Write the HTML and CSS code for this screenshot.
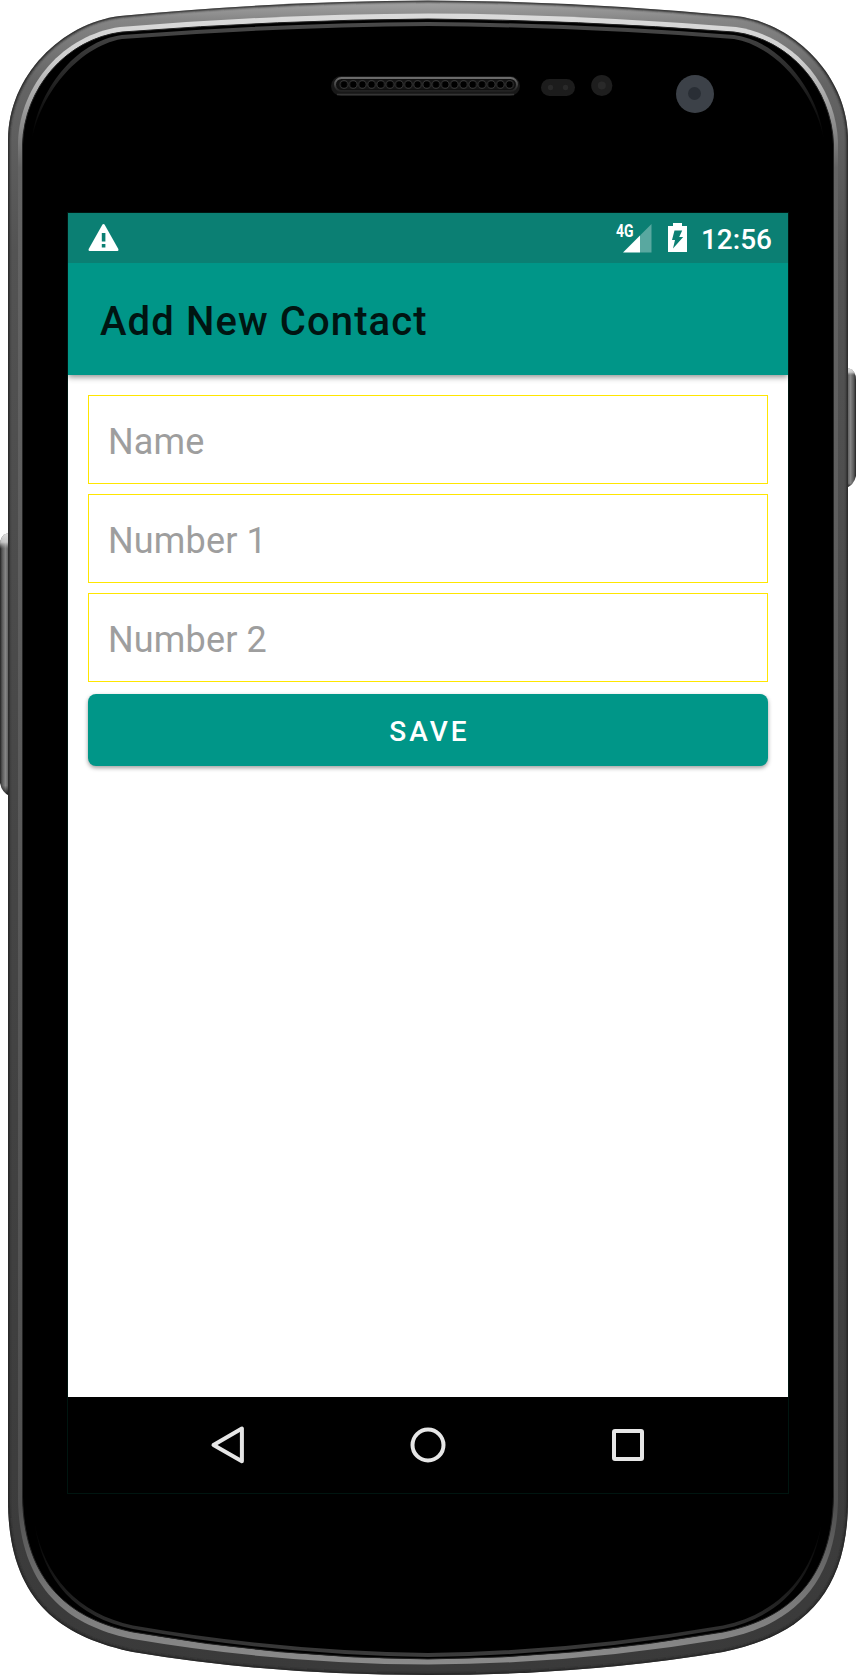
FILE: index.html
```html
<!DOCTYPE html>
<html lang="en">
<head>
<meta charset="utf-8">
<title>Add New Contact</title>
<link rel="stylesheet" href="styles.css">
</head>
<body>
<div class="phone">
  <svg class="shell" viewBox="0 0 856 1676" aria-hidden="true">
    <defs>
      <linearGradient id="rim" x1="0" y1="0" x2="0" y2="1676" gradientUnits="userSpaceOnUse">
        <stop offset="0" stop-color="#a6a6a6"/><stop offset=".012" stop-color="#858585"/><stop offset=".05" stop-color="#646464"/><stop offset=".15" stop-color="#535353"/><stop offset=".5" stop-color="#464646"/><stop offset="1" stop-color="#3a3a3a"/>
      </linearGradient>
      <linearGradient id="bevel" x1="0" y1="0" x2="0" y2="1676" gradientUnits="userSpaceOnUse">
        <stop offset="0" stop-color="#dedede"/><stop offset=".035" stop-color="#cfcfcf"/><stop offset=".06" stop-color="#a4a4a4"/><stop offset=".1" stop-color="#646464"/><stop offset=".9" stop-color="#505050"/><stop offset=".96" stop-color="#7c7c7c"/><stop offset="1" stop-color="#8e8e8e"/>
      </linearGradient>
      <linearGradient id="keyL"><stop offset="0" stop-color="#222"/><stop offset=".2" stop-color="#555"/><stop offset=".55" stop-color="#858585"/><stop offset="1" stop-color="#484848"/></linearGradient>
      <linearGradient id="keyR"><stop offset="0" stop-color="#484848"/><stop offset=".45" stop-color="#858585"/><stop offset=".8" stop-color="#555"/><stop offset="1" stop-color="#222"/></linearGradient>
      <linearGradient id="keyEnds" x1="0" y1="0" x2="0" y2="1"><stop offset="0" stop-color="#ddd"/><stop offset=".035" stop-color="#ddd" stop-opacity=".8"/><stop offset=".06" stop-color="#aaa" stop-opacity="0"/><stop offset=".96" stop-color="#000" stop-opacity="0"/><stop offset="1" stop-color="#000" stop-opacity=".85"/></linearGradient>
      <linearGradient id="shineT" x1="0" y1="20" x2="0" y2="140" gradientUnits="userSpaceOnUse"><stop offset="0" stop-color="#4c4c4c"/><stop offset=".3" stop-color="#343434"/><stop offset=".7" stop-color="#161616"/><stop offset="1" stop-color="#000"/></linearGradient>
      <linearGradient id="shineB" x1="0" y1="1520" x2="0" y2="1655" gradientUnits="userSpaceOnUse"><stop offset="0" stop-color="#000"/><stop offset=".6" stop-color="#222"/><stop offset="1" stop-color="#3c3c3c"/></linearGradient>
      <linearGradient id="spk" x1="0" y1="0" x2="0" y2="1"><stop offset="0" stop-color="#6b6b6b"/><stop offset="1" stop-color="#202020"/></linearGradient>
      <pattern id="mesh" x="339.4" y="80" width="9.2" height="9" patternUnits="userSpaceOnUse">
        <rect width="9.2" height="9" fill="#151515"/><circle cx="4.6" cy="4.5" r="3.8" fill="#000" stroke="#444" stroke-width=".8"/>
      </pattern>
      <filter id="soft" x="-5%" y="-5%" width="110%" height="110%"><feGaussianBlur stdDeviation=".9"/></filter>
      <clipPath id="outline"><path d="M8 140C8 76 62 23 120 16Q280 1 428 .5Q576 1 736 16C794 23 848 76 848 140V1500C848 1600 796 1637 723 1652Q586 1675 428 1675Q270 1675 133 1652C60 1637 8 1600 8 1500Z"/></clipPath>
    </defs>
    <path fill="url(#keyL)" d="M10 533H8Q0 535 0 545V783Q2 793 10 796Z"/>
    <path fill="url(#keyEnds)" d="M10 533H8Q0 535 0 545V783Q2 793 10 796Z"/>
    <path fill="url(#keyR)" d="M846 368H848Q856 370 856 380V476Q854 485 846 488Z"/>
    <path fill="url(#keyEnds)" d="M846 368H848Q856 370 856 380V476Q854 485 846 488Z"/>
    <g clip-path="url(#outline)">
      <rect width="856" height="1676" fill="url(#rim)"/>
      <path fill="none" stroke="#222" stroke-width="3" filter="url(#soft)" d="M8 140C8 76 62 23 120 16Q280 1 428 .5Q576 1 736 16C794 23 848 76 848 140V1500C848 1600 796 1637 723 1652Q586 1675 428 1675Q270 1675 133 1652C60 1637 8 1600 8 1500Z"/>
      <path fill="url(#bevel)" d="M18 142C20 84 64 35 120 27Q280 14 428 13.500Q576 14 736 27C792 35 836 84 838 142V1500C836 1592 784 1627 723 1639Q576 1664 428 1664.500Q280 1664 133 1639C72 1627 20 1592 18 1500Z"/>
      <path fill="#000" stroke="#222" stroke-width="1" d="M22.500 145C24 88 66 39 122 32Q280 20 428 19Q576 20 734 32C790 39 832 88 833.500 145V1496C832 1586 782 1620 723 1632Q576 1658 428 1659Q280 1658 133 1632C74 1620 24 1586 22.500 1496Z"/>
    </g>
    <path fill="url(#shineT)" d="M32 140C37 92 75 41 122 35Q280 23 428 22Q576 23 734 35C781 41 819 92 824 140C817 98 780 47 734 39Q576 27 428 26Q280 27 122 39C76 47 39 98 32 140Z"/>
    <path fill="url(#shineB)" d="M34 1520C42 1580 75 1617 133 1629Q280 1655 428 1657Q576 1655 723 1629C781 1617 814 1580 822 1520C813 1575 780 1613 723 1625.500Q576 1651 428 1653Q280 1651 133 1625.500C76 1613 43 1575 34 1520Z"/>
    <rect x="331" y="76" width="189" height="20" rx="10" fill="#181818"/>
    <path d="M337 94.500H514" stroke="#353535" stroke-width="1.500"/>
    <rect x="335" y="78" width="182" height="13" rx="6.500" fill="#101010" stroke="url(#spk)" stroke-width="2"/>
    <rect x="339.400" y="80" width="174.800" height="9" rx="4" fill="url(#mesh)"/>
    <rect x="541" y="79" width="34" height="17" rx="8.500" fill="#1c1c1c"/>
    <circle cx="550.500" cy="87.500" r="2.700" fill="#292929"/><circle cx="565.500" cy="87.500" r="2.700" fill="#292929"/>
    <circle cx="601.800" cy="85.500" r="10.600" fill="#1e1e1e"/><circle cx="601.800" cy="85.500" r="4" fill="#292929"/>
    <circle cx="695" cy="94" r="19" fill="#3c4148"/><circle cx="694.500" cy="93.500" r="6.500" fill="#292e35"/>
  </svg>

  <main class="screen">
    <header class="status">
      <svg class="warn" viewBox="0 0 30 27" aria-label="Warning"><path fill="#fff" d="M13.800.8Q15 -.6 16.200.8L29.800 25Q30.300 27 29 27H1Q-.3 27 .2 25Z"/><path fill="#0b7f73" d="M13.300 9h3.600v8.500h-3.600zM13.300 20h3.600v3.500h-3.600z"/></svg>
      <svg class="signal" viewBox="0 -6 38 36" aria-label="Mobile signal">
        <path fill="#fff" fill-opacity=".32" d="M24 12.500L35.500 1V29.500H24Z"/><path fill="#fff" d="M7 29.500L24 12.500V29.500Z"/>
        <text class="net" x="0" y="13.500" textLength="17.500" lengthAdjust="spacingAndGlyphs">4G</text>
      </svg>
      <svg class="battery" viewBox="0 0 19 29" aria-label="Battery charging"><path fill="#fff" d="M5 0h9v3h5v26H0V3h5z"/><path fill="#0b7f73" d="M6.500 7.500h7.700l-3 6.500h4L5 25.500l2-8.500H4z"/></svg>
      <span class="clock">12:56</span>
    </header>
    <div class="appbar"><h1 class="title">Add New Contact</h1></div>
    <form class="form">
      <input class="field" type="text" placeholder="Name">
      <input class="field" type="text" placeholder="Number 1">
      <input class="field" type="text" placeholder="Number 2">
      <button class="save" type="button">SAVE</button>
    </form>
    <nav class="nav">
      <svg class="key" viewBox="0 0 40 40" aria-label="Back"><path d="M33.900 3.500V36.300L5.500 20Z"/></svg>
      <svg class="key" viewBox="0 0 40 40" aria-label="Home"><circle cx="20" cy="20" r="15.500"/></svg>
      <svg class="key" viewBox="0 0 40 40" aria-label="Recent apps"><rect x="6" y="6" width="28" height="28" rx="1"/></svg>
    </nav>
  </main>
</div>
</body>
</html>
```
FILE: styles.css
```css
* { box-sizing: border-box; }
body { margin: 0; background: #fff; font-family: Roboto, sans-serif; }
.phone { position: relative; width: 856px; height: 1676px; padding: 213px 68px 183px; overflow: hidden; }
.shell { position: absolute; inset: 0; width: 856px; height: 1676px; }
.screen { position: relative; display: flex; flex-direction: column; width: 720px; height: 1280px; background: #fff; box-shadow: 0 0 0 1px #001510; }
.status { display: flex; align-items: flex-start; height: 50px; padding: 0 16px 0 20px; background: #0b7f73; color: #fff; }
.warn { width: 31px; height: 27px; margin-top: 11px; }
.signal { width: 38px; height: 36px; margin: 4px 14px 0 auto; overflow: visible; }
.net { fill: #fff; font-size: 18px; font-weight: 700; font-family: Roboto, sans-serif; }
.battery { width: 19px; height: 29px; margin: 10px 14px 0 0; }
.clock { font-size: 28px; font-weight: 500; line-height: 33px; margin-top: 10px; }
.appbar { position: relative; display: flex; align-items: center; height: 112px; padding-left: 32px; background: #009688; box-shadow: 0 2px 6px rgba(0,0,0,.45); clip-path: inset(0 0 -10px 0); }
.title { margin: 6px 0 0; font-size: 40px; font-weight: 500; line-height: 48px; letter-spacing: 1.1px; color: #001512; white-space: nowrap; }
.form { display: flex; flex: 1; flex-direction: column; gap: 10px; padding: 20px; }
.field { display: block; width: 100%; height: 89px; padding: 5px 19px 0; border: 1px solid #ffe600; border-radius: 0; background: #fff; font: 400 36px/42px Roboto, sans-serif; letter-spacing: .15px; color: #222; outline: 0; }
.field::placeholder { color: #9e9e9e; opacity: 1; }
.save { height: 72px; margin-top: 2px; padding: 2px 0 0 3px; border: 0; border-radius: 8px; background: #009688; box-shadow: 0 2px 4px rgba(0,0,0,.38); color: #fff; font: 500 28px/33px Roboto, sans-serif; letter-spacing: 3px; }
.nav { display: flex; align-items: center; justify-content: space-between; height: 96px; padding: 0 140px; background: #000; }
.key { width: 40px; height: 40px; fill: none; stroke: #e6e6e6; stroke-width: 4; stroke-linejoin: round; }
```
